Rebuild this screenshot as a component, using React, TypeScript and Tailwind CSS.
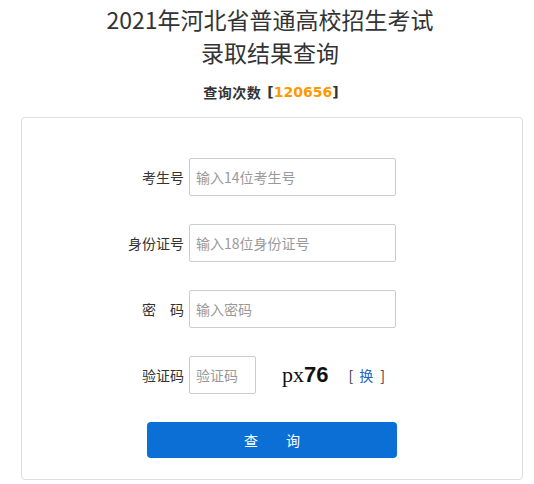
import React, { useState } from "react";

const Row = ({
  label,
  children,
}: {
  label: string;
  children: React.ReactNode;
}) => (
  <div className="flex items-center h-[38px]">
    <label className="w-[162px] text-right text-[14px] text-[#333] whitespace-pre">
      {label}
    </label>
    <div className="ml-[5px] flex items-center">{children}</div>
  </div>
);

const inputCls =
  "h-[38px] border border-[#ccc] rounded-[2px] px-[6px] text-[14px] text-[#333] placeholder:text-[#999] outline-none";

const App = () => {
  const [ksh, setKsh] = useState("");
  const [sfz, setSfz] = useState("");
  const [pwd, setPwd] = useState("");
  const [code, setCode] = useState("");

  return (
    <div className="w-[534px] min-h-[484px] bg-white font-['Noto_Sans_CJK_SC',sans-serif] text-[#333]">
      <h1 className="pt-[3px] pl-[6px] text-center text-[23px] leading-[33px] text-[#333]">
        2021年河北省普通高校招生考试
        <br />
        录取结果查询
      </h1>
      <p className="mt-[13px] pl-[8px] h-[20px] flex justify-center items-center text-[14px] leading-[20px] font-bold text-[#333]">
        <span className="tracking-[0.5px]">查询次数</span>
        <span className="ml-[6px] font-['DejaVu_Sans',sans-serif] text-[14px] leading-[20px]">
          [<span className="text-[#ff9900]">120656</span>]
        </span>
      </p>
      <div className="mt-[15px] ml-[21px] w-[502px] border border-[#ddd] rounded-[4px] pt-[40px] pb-[21px] flex flex-col gap-[28px]">
        <Row label="考生号">
          <input
            value={ksh}
            onChange={(e) => setKsh(e.target.value)}
            className={inputCls + " w-[207px]"}
            placeholder="输入14位考生号"
          />
        </Row>
        <Row label="身份证号">
          <input
            value={sfz}
            onChange={(e) => setSfz(e.target.value)}
            className={inputCls + " w-[207px]"}
            placeholder="输入18位身份证号"
          />
        </Row>
        <Row label={"密　码"}>
          <input
            type="password"
            value={pwd}
            onChange={(e) => setPwd(e.target.value)}
            className={inputCls + " w-[207px]"}
            placeholder="输入密码"
          />
        </Row>
        <Row label="验证码">
          <input
            value={code}
            onChange={(e) => setCode(e.target.value)}
            className={inputCls + " w-[67px]"}
            placeholder="验证码"
          />
          <span className="ml-[26px] text-[#111] leading-none">
            <span className="font-['Liberation_Serif',serif] text-[22px]">px</span>
            <span className="font-['Liberation_Sans',sans-serif] font-bold text-[22px]">76</span>
          </span>
          <span className="ml-[20px] flex items-center text-[14px] text-[#333]">
            <span>[</span>
            <a className="ml-[6px] text-[#1a66c4] cursor-pointer">换</a>
            <span className="ml-[7px]">]</span>
          </span>
        </Row>
        <button
          type="button"
          className="ml-[125px] w-[250px] h-[36px] rounded-[4px] bg-[#0c6fd5] text-white text-[14px]"
        >
          查　　询
        </button>
      </div>
    </div>
  );
};

export default App;
